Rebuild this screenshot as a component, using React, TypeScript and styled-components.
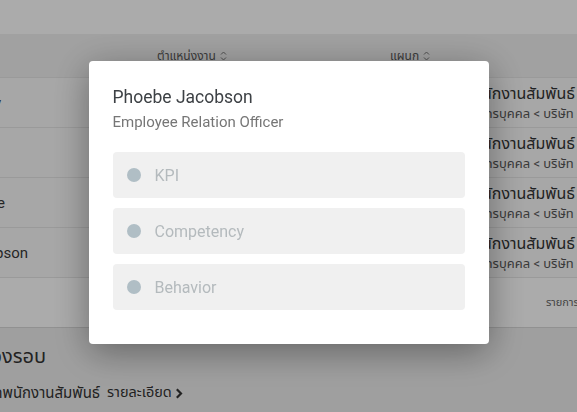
import React from "react";
import styled, { createGlobalStyle } from "styled-components";

const GlobalStyle = createGlobalStyle`
  html, body { margin: 0; padding: 0; background: #ffffff; }
  body {
    font-family: Roboto, "Noto Sans Thai", "Noto Sans", "DejaVu Sans", sans-serif;
    overflow: hidden;
  }
  * { box-sizing: border-box; }
`;

const Page = styled.div`
  width: 577px;
  height: 412px;
  overflow: hidden;
  background: #ffffff;
`;

const Shift = styled.div`
  width: 900px;
  margin-left: -120px;
`;

const TopBar = styled.div`
  height: 34px;
  background: #ffffff;
`;

const Grid = styled.div`
  display: grid;
  grid-template-columns: 277px 233px 390px;
  grid-template-rows: 100%;
  align-items: center;
`;

const HeaderRow = styled(Grid)`
  height: 43px;
  background: #f0f0f0;
  font-size: 12px;
  line-height: 16px;
  color: #5a5a5a;
`;

const HeaderCell = styled.div`
  display: flex;
  align-items: center;
  gap: 4px;
`;

const BodyRow = styled(Grid)`
  height: 50px;
  background: #f9f9f9;
  border-top: 1px solid #e6e6e6;
`;

const NameCell = styled.div`
  text-align: right;
  font-size: 15px;
  line-height: 20px;
  color: #3a3a3a;
  white-space: nowrap;
`;

const DeptCell = styled.div<{ $indent: number }>`
  padding-left: ${(p) => p.$indent}px;
  display: flex;
  flex-direction: column;
  gap: 2px;
  white-space: nowrap;
`;

const DeptMain = styled.div`
  font-size: 16px;
  line-height: 20px;
  color: #333333;
`;

const DeptSub = styled.div`
  font-size: 13px;
  line-height: 16px;
  margin-left: -5px;
  color: #555555;
`;

const FooterRow = styled.div`
  height: 51px;
  background: #ffffff;
  border-top: 1px solid #e6e6e6;
  border-bottom: 1px solid #d8d8d8;
  display: flex;
  align-items: center;
  padding-left: 666px;
  font-size: 11px;
  line-height: 16px;
  color: #666666;
  white-space: nowrap;
`;

const Section = styled.div`
  background: #eeeeee;
  height: 120px;
  padding-top: 14px;
`;

const SectionTitle = styled.div`
  display: flex;
  justify-content: flex-end;
  font-size: 20px;
  line-height: 28px;
  color: #333333;
  white-space: nowrap;
  width: 166px;
`;

const SectionLine = styled.div`
  display: flex;
  align-items: center;
  margin-top: 12px;
  line-height: 22px;
  white-space: nowrap;
`;

const SectionName = styled.div`
  display: flex;
  justify-content: flex-end;
  flex: none;
  font-size: 15px;
  color: #333333;
  width: 220px;
`;

const DetailLink = styled.div`
  margin-left: 7px;
  font-size: 14.5px;
  color: #333333;
  display: flex;
  align-items: center;
  gap: 3px;
`;

const Overlay = styled.div`
  position: fixed;
  inset: 0;
  background: rgba(0, 0, 0, 0.33);
  display: flex;
  justify-content: center;
  align-items: flex-start;
  padding-top: 61px;
`;

const Modal = styled.div`
  width: 400px;
  background: #ffffff;
  border-radius: 4px;
  padding: 25px 24px 34px;
  box-shadow: 0 8px 36px rgba(0, 0, 0, 0.38);
`;

const Title = styled.div`
  font-size: 17.5px;
  line-height: 22px;
  color: #3d4145;
`;

const Subtitle = styled.div`
  font-size: 15px;
  line-height: 20px;
  margin-top: 4px;
  color: #767676;
`;

const List = styled.div`
  margin-top: 20px;
  display: flex;
  flex-direction: column;
  gap: 10px;
`;

const Item = styled.div`
  height: 46px;
  background: #f0f0f0;
  border-radius: 4px;
  display: flex;
  align-items: center;
  padding-left: 14px;
  gap: 14px;
`;

const Dot = styled.span`
  width: 14px;
  height: 14px;
  border-radius: 50%;
  background: #b0bec5;
  flex: none;
`;

const ItemLabel = styled.span`
  font-size: 16px;
  color: #b4babd;
`;

const SortIcon = () => (
  <svg width="7" height="10" viewBox="0 0 7 10" fill="none">
    <path d="M1 3.5 L3.5 1 L6 3.5" stroke="#777" strokeWidth="1" />
    <path d="M1 6.5 L3.5 9 L6 6.5" stroke="#777" strokeWidth="1" />
  </svg>
);

const Chevron = () => (
  <svg width="8" height="11" viewBox="0 0 8 11" fill="none">
    <path d="M1.8 1.2 L6 5.5 L1.8 9.8" stroke="#333" strokeWidth="2.2" />
  </svg>
);

const rows = [
  { name: "Natalie Gray", end: 1 },
  { name: "Aaron Mitchell", end: -20 },
  { name: "Connie Lee", end: 5 },
  { name: "Phoebe Jacobson", end: 28 },
];

const items = ["KPI", "Competency", "Behavior"];

export default function App() {
  return (
    <>
      <GlobalStyle />
      <Page>
        <Shift>
          <TopBar />
          <HeaderRow>
            <div />
            <HeaderCell>
              ตำแหน่งงาน <SortIcon />
            </HeaderCell>
            <HeaderCell>
              แผนก <SortIcon />
            </HeaderCell>
          </HeaderRow>
          {rows.map((r, i) => (
            <BodyRow key={i}>
              <NameCell style={{ paddingRight: 157 - r.end }}>{r.name}</NameCell>
              <div />
              <DeptCell $indent={42}>
                <DeptMain>แผนกพนักงานสัมพันธ์</DeptMain>
                <DeptSub>ฝ่ายทรัพยากรบุคคล &lt; บริษัท ตัวอย่าง จำกัด</DeptSub>
              </DeptCell>
            </BodyRow>
          ))}
          <FooterRow>รายการต่อหน้า 10</FooterRow>
          <Section>
            <SectionTitle>
              <span>ผลการประเมินของรอบ</span>
            </SectionTitle>
            <SectionLine>
              <SectionName>
                <span>แผนกพนักงานสัมพันธ์</span>
              </SectionName>
              <DetailLink>
                รายละเอียด <Chevron />
              </DetailLink>
            </SectionLine>
          </Section>
        </Shift>
      </Page>
      <Overlay>
        <Modal>
          <Title>Phoebe Jacobson</Title>
          <Subtitle>Employee Relation Officer</Subtitle>
          <List>
            {items.map((it) => (
              <Item key={it}>
                <Dot />
                <ItemLabel>{it}</ItemLabel>
              </Item>
            ))}
          </List>
        </Modal>
      </Overlay>
    </>
  );
}
